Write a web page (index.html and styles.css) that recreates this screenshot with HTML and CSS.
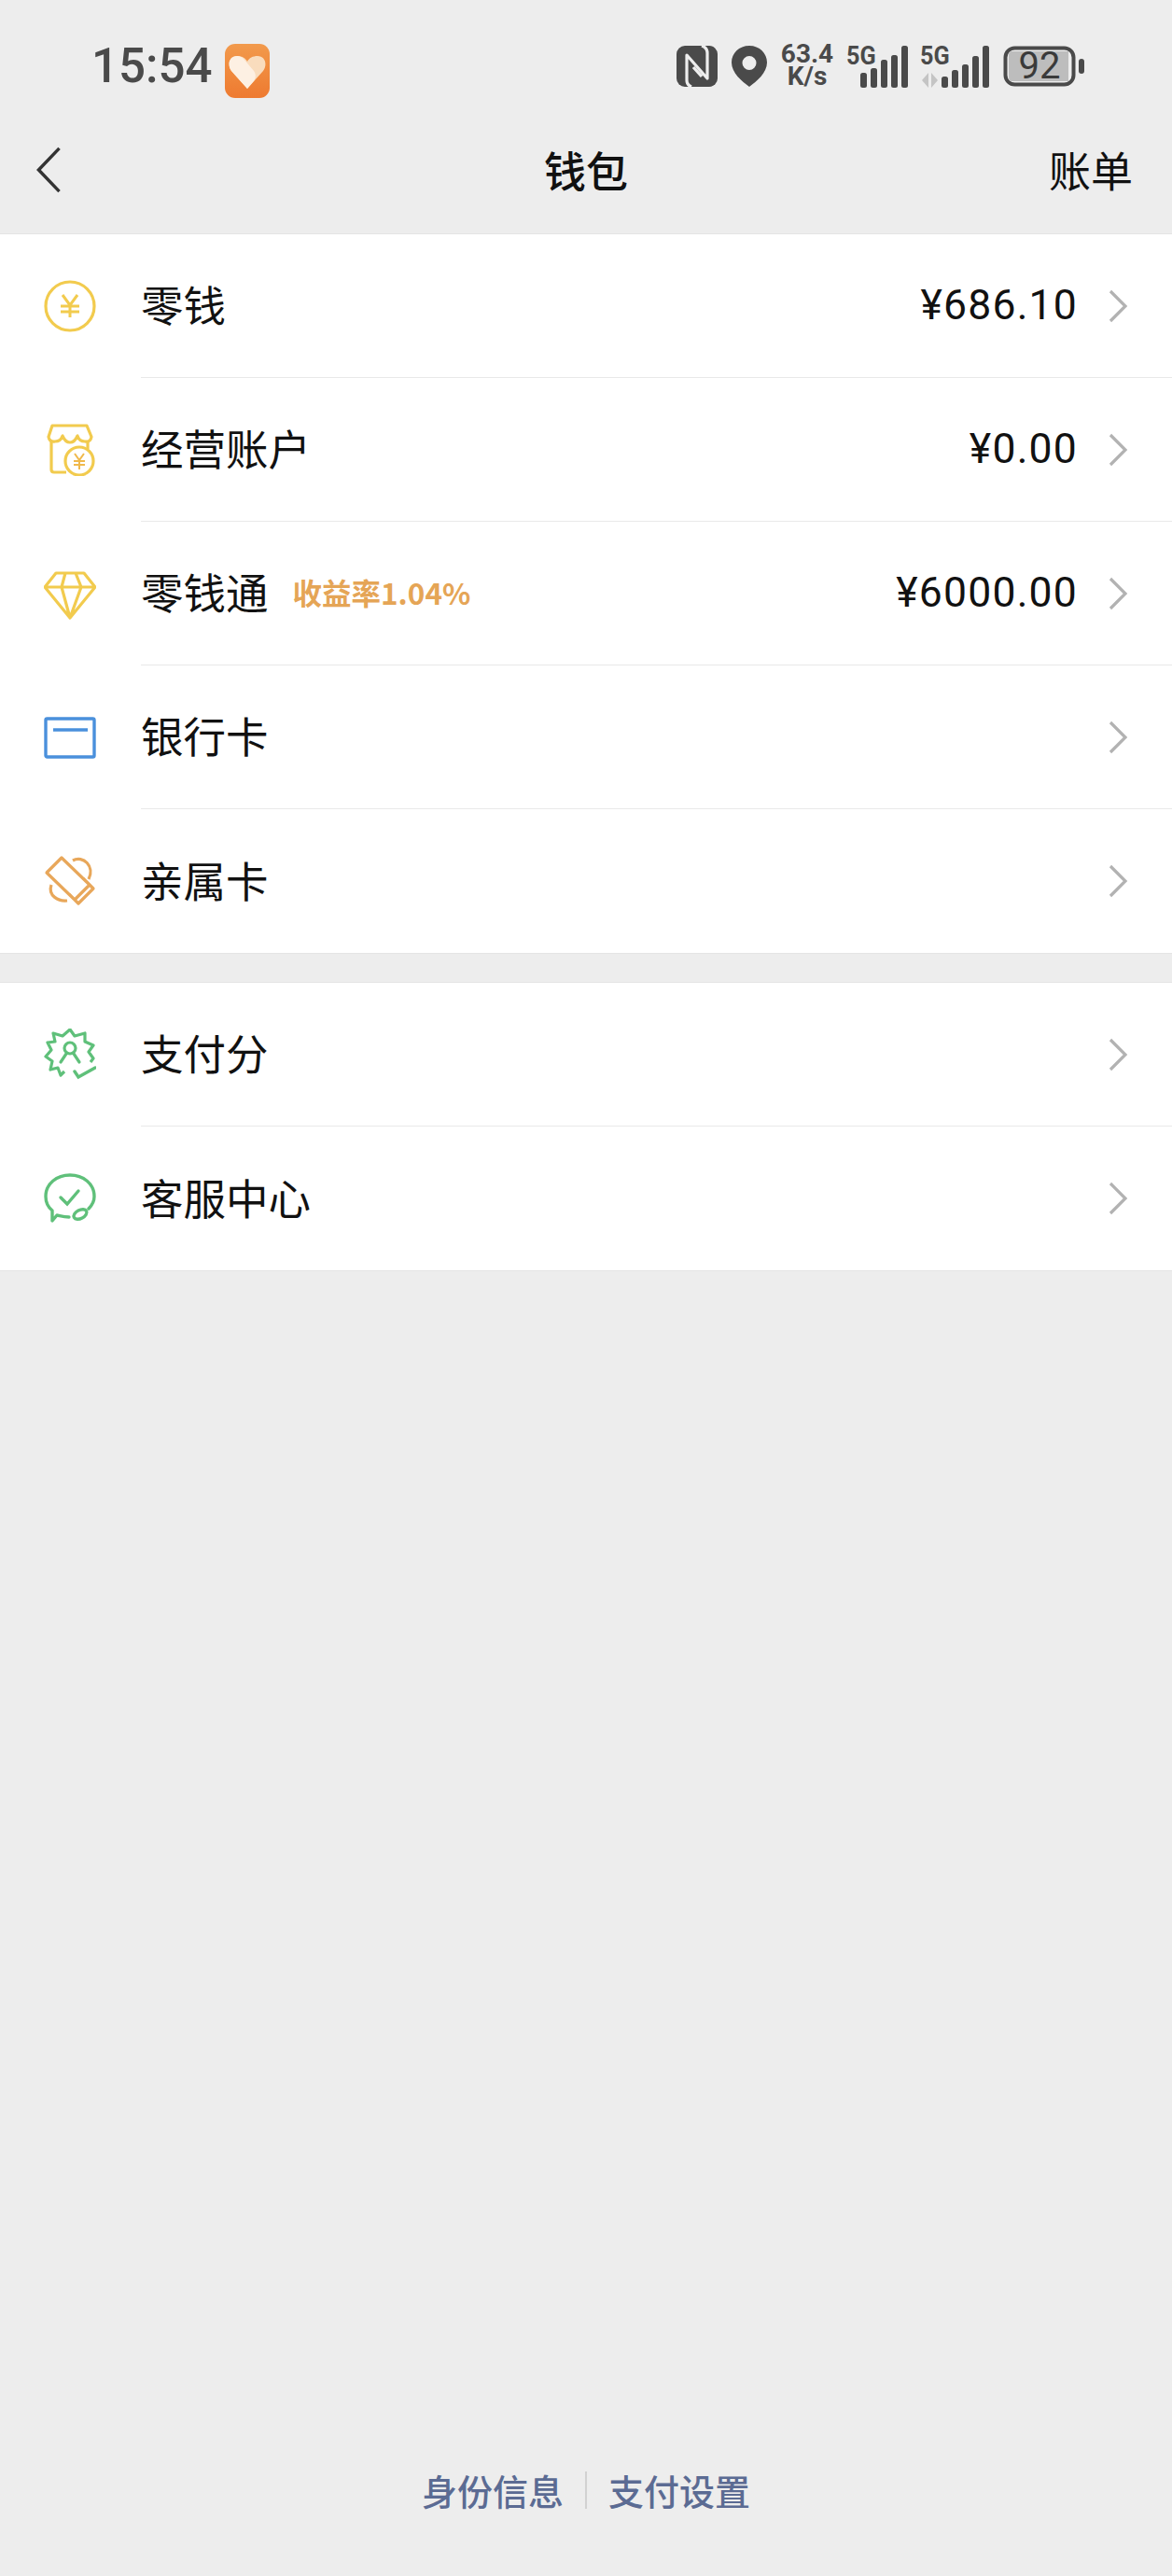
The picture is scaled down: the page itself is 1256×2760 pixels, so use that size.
FILE: index.html
```html
<!DOCTYPE html>
<html lang="zh">
<head>
<meta charset="utf-8">
<title>钱包</title>
<link rel="stylesheet" href="styles.css">
</head>
<body>
<header class="top">
  <div class="status">
    <div class="status-left">
      <span class="time">15:54</span>
      <svg class="app-icon" viewBox="0 0 48 58">
        <defs><linearGradient id="ag" x1="0" y1="0" x2="0" y2="1"><stop offset="0" stop-color="#f29a4c"/><stop offset="1" stop-color="#ee7a30"/></linearGradient></defs>
        <rect width="48" height="58" rx="11" fill="url(#ag)"/>
        <path d="M24 48 L7 29 C2 22 5 13 13 13 C18 13 22 15 24 19 C26 15 30 13 35 13 C43 13 46 22 41 29 Z" fill="#f9dcbd"/>
        <path d="M24 48 L7 29 C2 22 5 13 13 13 C16 13 18 14 20 16 L31 29 C34 33 33 38 30 41 Z" fill="#fdf0e3"/>
      </svg>
    </div>
    <div class="status-right">
      <svg class="ic-nfc" viewBox="0 0 44 44">
        <rect width="44" height="44" rx="9" fill="#4a4a4a"/>
        <path d="M16 44 Q11 42 11 37 V10 L33 35 V8 Q33 2 27 0 M18 23 L27 33" fill="none" stroke="#ededed" stroke-width="3.2" stroke-linejoin="round"/>
      </svg>
      <svg class="ic-pin" viewBox="0 0 38 44">
        <path fill-rule="evenodd" d="M19 0 C30 0 38 8 38 18 C38 29 27 38 19 44 C11 38 0 29 0 18 C0 8 8 0 19 0 Z M19 11 A7.5 7.5 0 1 0 19 26 A7.5 7.5 0 1 0 19 11 Z" fill="#4a4a4a"/>
      </svg>
      <div class="speed"><span>63.4</span><span>K/s</span></div>
      <div class="sig">
        <span class="g5">5G</span>
        <svg class="bars" viewBox="0 0 51 46">
          <rect x="0" y="29" width="7" height="16" rx="2.5" fill="#4a4a4a"/><rect x="11" y="24" width="7" height="21" rx="2.5" fill="#4a4a4a"/><rect x="22" y="15" width="7" height="30" rx="2.5" fill="#4a4a4a"/><rect x="33" y="10" width="7" height="35" rx="2.5" fill="#4a4a4a"/><rect x="44" y="0" width="7" height="45" rx="2.5" fill="#4a4a4a"/>
        </svg>
      </div>
      <div class="sig sig-two">
        <span class="g5">5G</span>
        <svg class="bars" viewBox="0 0 73 46">
          <path d="M8 29 V45 L1 37 Z M11 29 V45 L18 37 Z" fill="#c4c4c4"/>
          <rect x="22" y="33" width="7" height="12" rx="2.5" fill="#4a4a4a"/><rect x="33" y="26" width="7" height="19" rx="2.5" fill="#4a4a4a"/><rect x="44" y="20" width="7" height="25" rx="2.5" fill="#4a4a4a"/><rect x="55" y="11" width="7" height="34" rx="2.5" fill="#4a4a4a"/><rect x="66" y="0" width="7" height="45" rx="2.5" fill="#4a4a4a"/>
        </svg>
      </div>
      <div class="battery">
        <svg class="bat-shell" viewBox="0 0 88 44">
          <rect x="2.5" y="2.5" width="73" height="39" rx="10" fill="none" stroke="#4a4a4a" stroke-width="4"/>
          <path d="M9 6 H70 V38 H9 Q6 38 6 34 V10 Q6 6 9 6 Z" fill="#bdbdbd"/>
          <rect x="81" y="14" width="6" height="16" rx="3" fill="#4a4a4a"/>
        </svg>
        <span class="bat-num">92</span>
      </div>
    </div>
  </div>
  <nav class="nav">
    <svg class="back" viewBox="0 0 28 52"><path d="M26 2 L3 26 L26 50" fill="none" stroke="#333" stroke-width="3.6"/></svg>
    <h1 class="title">钱包</h1>
    <span class="bill">账单</span>
  </nav>
</header>

<section class="group">
  <div class="row">
    <svg class="ic" viewBox="0 0 56 56"><circle cx="28" cy="28" r="26" fill="none" stroke="#f2cb4e" stroke-width="3.2"/><path d="M20 16 L28 27 L36 16 M18 28 H38 M18 34 H38 M28 27 V40" fill="none" stroke="#f2cb4e" stroke-width="3"/></svg>
    <div class="cell"><span class="label">零钱</span><span class="value">¥686.10</span><svg class="chev" viewBox="0 0 22 36"><path d="M2 2 L18 18 L2 34" fill="none" stroke="#b2b2b2" stroke-width="3.2"/></svg></div>
  </div>
  <div class="row">
    <svg class="ic" viewBox="0 0 56 56">
      <path d="M9 2 H46 L51 14 Q50 20 44 19 Q38 19 36 13 Q33 20 28 20 Q23 20 20 13 Q18 19 12 19 Q6 20 5 14 Z" fill="none" stroke="#f2cb4e" stroke-width="3.2" stroke-linejoin="round"/>
      <path d="M8 19 V49 Q8 52 11 52 H24 M47 19 V27" fill="none" stroke="#f2cb4e" stroke-width="3.2"/>
      <circle cx="38" cy="40" r="15" fill="#fff" stroke="#f2cb4e" stroke-width="3.2"/>
      <path d="M33 32 L38 39 L43 32 M32 40 H44 M32 44 H44 M38 39 V49" fill="none" stroke="#f0b94c" stroke-width="2"/>
    </svg>
    <div class="cell"><span class="label">经营账户</span><span class="value">¥0.00</span><svg class="chev" viewBox="0 0 22 36"><path d="M2 2 L18 18 L2 34" fill="none" stroke="#b2b2b2" stroke-width="3.2"/></svg></div>
  </div>
  <div class="row">
    <svg class="ic" viewBox="0 0 56 56"><path d="M13 6 H43 L55 21 L28 54 L1 21 Z M1 21 H55 M19 21 L28 54 L40 21 M19 21 L23 6 M40 21 L34 6" fill="none" stroke="#f2cb4e" stroke-width="3.2" stroke-linejoin="round"/></svg>
    <div class="cell"><span class="label">零钱通</span><span class="badge">收益率1.04%</span><span class="value">¥6000.00</span><svg class="chev" viewBox="0 0 22 36"><path d="M2 2 L18 18 L2 34" fill="none" stroke="#b2b2b2" stroke-width="3.2"/></svg></div>
  </div>
  <div class="row">
    <svg class="ic" viewBox="0 0 56 56"><rect x="2" y="8" width="52" height="41" rx="1.500" fill="none" stroke="#4a90dc" stroke-width="3.4"/><path d="M10 20 H47" stroke="#4a90dc" stroke-width="3.400"/></svg>
    <div class="cell"><span class="label">银行卡</span><svg class="chev" viewBox="0 0 22 36"><path d="M2 2 L18 18 L2 34" fill="none" stroke="#b2b2b2" stroke-width="3.2"/></svg></div>
  </div>
  <div class="row">
    <svg class="ic" viewBox="0 0 56 56"><path d="M19 3 L49 32 L33 48 L3 19 Z M42 25 L53 36 L37 52 L27 42" fill="none" stroke="#e8a75a" stroke-width="3.2" stroke-linejoin="round"/><path d="M31 6 C42 0 55 12 48 26 M8 32 C4 44 16 50 25 49" fill="none" stroke="#e8a75a" stroke-width="3.2"/></svg>
    <div class="cell"><span class="label">亲属卡</span><svg class="chev" viewBox="0 0 22 36"><path d="M2 2 L18 18 L2 34" fill="none" stroke="#b2b2b2" stroke-width="3.2"/></svg></div>
  </div>
</section>

<section class="group second">
  <div class="row">
    <svg class="ic" viewBox="0 0 56 56">
      <path d="M22 46 L18 50 L15 42 L7 44 L9 35 L2 30 L8 23 L4 15 L12 14 L10 5 L20 8 L28 1 L33 8 L44 5 L44 14 L53 18 L48 25 L53 32 L50 36" fill="none" stroke="#5fc07a" stroke-width="3.2" stroke-linejoin="round"/>
      <circle cx="28" cy="21" r="6" fill="none" stroke="#5fc07a" stroke-width="3.2"/>
      <path d="M24 27 L18 36 M32 27 L38 36" fill="none" stroke="#5fc07a" stroke-width="3.2" stroke-linecap="round"/>
      <path d="M33 46 L37 52 L55 42" fill="none" stroke="#5fc07a" stroke-width="3.400" stroke-linecap="round"/>
    </svg>
    <div class="cell"><span class="label">支付分</span><svg class="chev" viewBox="0 0 22 36"><path d="M2 2 L18 18 L2 34" fill="none" stroke="#b2b2b2" stroke-width="3.2"/></svg></div>
  </div>
  <div class="row">
    <svg class="ic" viewBox="0 0 56 56">
      <path d="M27 48 C20 48 16 46 14 46 L9 52 L9 41 C4 37 2 32 2 26 C2 12 14 3 28 3 C42 3 54 12 54 26 C54 31 52 35 48 39" fill="none" stroke="#5fc07a" stroke-width="3.400" stroke-linecap="round" stroke-linejoin="round"/>
      <ellipse cx="39" cy="45" rx="7.500" ry="4.500" transform="rotate(-28 39 45)" fill="none" stroke="#5fc07a" stroke-width="3.400"/>
      <path d="M18 27 L25 34 L37 20" fill="none" stroke="#5fc07a" stroke-width="3.400" stroke-linecap="round"/>
    </svg>
    <div class="cell"><span class="label">客服中心</span><svg class="chev" viewBox="0 0 22 36"><path d="M2 2 L18 18 L2 34" fill="none" stroke="#b2b2b2" stroke-width="3.2"/></svg></div>
  </div>
</section>

<footer class="foot">
  <span class="link">身份信息</span>
  <span class="sep"></span>
  <span class="link">支付设置</span>
</footer>
</body>
</html>
```
FILE: styles.css
```css
* { box-sizing: border-box; }
html, body { margin: 0; padding: 0; }
body {
  width: 1256px;
  height: 2760px;
  background: #ededed;
  display: flex;
  flex-direction: column;
  font-family: "Noto Sans CJK SC", "Noto Sans", sans-serif;
  color: #111;
  overflow: hidden;
}
.top { height: 251px; border-bottom: 1px solid #e4e4e4; flex: none; }
.status {
  height: 145px;
  padding: 48px 0 0 98px;
  display: flex;
  justify-content: space-between;
  align-items: flex-start;
}
.status-left { display: flex; align-items: flex-start; }
.time {
  width: 143px;
  font: 500 51px/46px Roboto, sans-serif;
  color: #4a4a4a;
}
.app-icon { width: 48px; height: 58px; margin-top: -1px; }
.status-right { display: flex; align-items: flex-start; padding: 1px 93px 0 0; }
.status-right svg { display: block; flex: none; }
.ic-nfc { width: 44px; height: 44px; margin-right: 15px; }
.ic-pin { width: 38px; height: 44px; margin-right: 14px; }
.speed {
  width: 58px;
  margin-right: 13px;
  margin-top: -3px;
  display: flex;
  flex-direction: column;
  align-items: center;
  font: 700 28px/24px Roboto, sans-serif;
  color: #4a4a4a;
}
.sig { width: 66px; height: 46px; margin-right: 13px; display: flex; justify-content: flex-end; position: relative; }
.sig-two { width: 74px; margin-right: 15px; }
.bars { width: 51px; height: 46px; }
.sig-two .bars { width: 73px; }
.g5 {
  position: absolute;
  left: 0;
  top: -3px;
  font: 700 28px/28px Roboto, sans-serif;
  color: #4a4a4a;
  transform: scaleX(.9);
  transform-origin: left center;
}
.battery { width: 88px; height: 44px; position: relative; }
.bat-shell { width: 88px; height: 44px; }
.bat-num {
  position: absolute;
  left: 0;
  width: 78px;
  top: 0;
  text-align: center;
  font: 400 40px/44px Roboto, sans-serif;
  color: #3a3a3a;
}
.nav {
  height: 74px;
  padding: 0 42px;
  display: grid;
  grid-template-columns: 1fr auto 1fr;
  align-items: center;
}
.back { width: 28px; height: 50px; margin-left: -4px; }
.title { margin: 0; font-size: 45px; line-height: 60px; font-weight: 500; color: #111; }
.bill { font-size: 45px; line-height: 60px; font-weight: 400; color: #111; justify-self: end; }
.group {
  background: #fff;
  border-bottom: 1px solid #e4e4e4;
  flex: none;
}
.second { margin-top: 30px; border-top: 1px solid #e4e4e4; }
.row {
  height: 154px;
  display: flex;
  align-items: center;
  padding-left: 47px;
}
.ic { width: 56px; height: 56px; flex: none; margin-right: 48px; }
.cell {
  flex: 1;
  height: 100%;
  display: flex;
  align-items: center;
  padding-right: 46px;
  border-bottom: 1px solid #e9e9e9;
}
.row:last-child .cell { border-bottom: 0; }
.label { font-size: 45.500px; line-height: 60px; color: #111; margin-bottom: 5px; }
.badge { margin-left: 26px; margin-bottom: 3px; font-size: 31.500px; line-height: 40px; font-weight: 700; color: #e5a556; }
.value {
  margin-left: auto;
  margin-bottom: 2px;
  font: 400 44.500px/60px Roboto, sans-serif;
  letter-spacing: 1.2px;
  color: #111;
}
.chev { width: 22px; height: 36px; flex: none; margin-left: 33px; }
.cell > .chev:nth-child(2) { margin-left: auto; }
.foot {
  margin-top: auto;
  height: 113px;
  padding-bottom: 72px;
  display: flex;
  justify-content: center;
  align-items: center;
  gap: 23px;
  flex: none;
}
.link { font-size: 38px; line-height: 50px; font-weight: 500; color: #5b6b93; }
.sep { width: 2px; height: 40px; background: #d2d2d2; }
```
